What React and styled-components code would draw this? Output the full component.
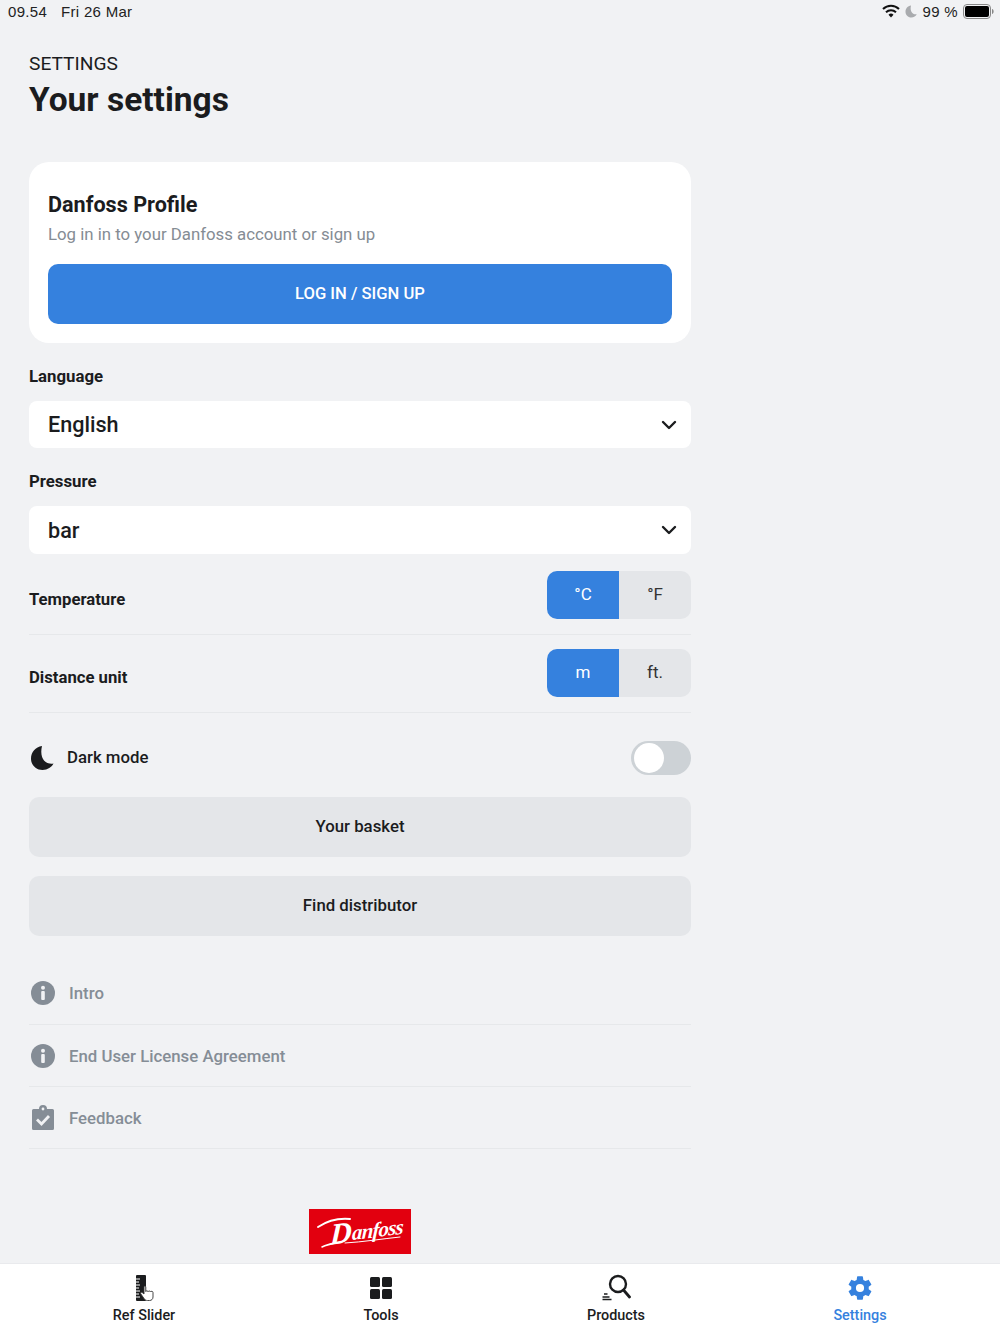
import React from 'react';
import styled, { createGlobalStyle } from 'styled-components';

const GlobalStyle = createGlobalStyle`
  html, body { margin: 0; padding: 0; }
  body { font-family: Roboto, 'Liberation Sans', sans-serif; background: #f1f2f4; color: #1b1c1e; }
  * { box-sizing: border-box; }
`;

const BLUE = '#3581de';

const Screen = styled.div`
  width: 1000px;
  height: 1334px;
  display: flex;
  flex-direction: column;
  overflow: hidden;
  background: #f1f2f4;
`;

const StatusBar = styled.div`
  height: 24px;
  padding: 0 6px 2px 8px;
  display: flex;
  align-items: center;
  justify-content: space-between;
  font-family: 'Liberation Sans', sans-serif;
  font-size: 15px;
  letter-spacing: 0.3px;
  color: #222;
`;

const StatusLeft = styled.div`
  display: flex;
  gap: 14px;
`;

const StatusRight = styled.div`
  display: flex;
  align-items: center;
  gap: 5px;
`;

const Main = styled.div`
  flex: 1;
  width: 720px;
  padding: 0 29px;
  display: flex;
  flex-direction: column;
`;

const Eyebrow = styled.div`
  margin-top: 28px;
  font-size: 19.2px;
  line-height: 24px;
  color: #1b1c1e;
`;

const Title = styled.h1`
  margin: 4px 0 0;
  font-size: 33.5px;
  line-height: 40px;
  font-weight: 700;
  color: #1b1c1e;
`;

const Card = styled.section`
  margin-top: 42px;
  height: 181px;
  padding: 28px 19px 19px;
  background: #fff;
  border-radius: 20px;
`;

const CardTitle = styled.h2`
  margin: 0;
  font-size: 21.6px;
  line-height: 30px;
  font-weight: 700;
`;

const CardText = styled.p`
  margin: 0;
  font-size: 16.8px;
  line-height: 28px;
  color: #858c94;
`;

const PrimaryButton = styled.div`
  margin-top: 16px;
  height: 60px;
  padding-bottom: 1px;
  display: flex;
  align-items: center;
  justify-content: center;
  background: ${BLUE};
  border-radius: 10px;
  color: #fff;
  font-size: 16.6px;
  font-weight: 500;
`;

const FieldLabel = styled.div`
  margin-top: 22px;
  font-size: 16.8px;
  line-height: 22px;
  font-weight: 700;
`;

const Select = styled.div`
  margin-top: 14px;
  height: ${p => p.$height}px;
  padding: 0 14px 0 19px;
  display: flex;
  align-items: center;
  justify-content: space-between;
  background: #fff;
  border-radius: 8px;
  font-size: 21.6px;
  font-weight: 500;
`;

const UnitRow = styled.div`
  height: ${p => p.$height}px;
  padding-bottom: 15px;
  display: flex;
  align-items: flex-end;
  justify-content: space-between;
  border-bottom: 1px solid #e6e8ea;
`;

const UnitLabel = styled.div`
  font-size: 16.7px;
  font-weight: 700;
  line-height: 22px;
  margin-bottom: 8px;
`;

const Segments = styled.div`
  display: flex;
  width: 144px;
  height: 48px;
  border-radius: 10px;
  overflow: hidden;
`;

const Segment = styled.div`
  flex: 1;
  display: flex;
  align-items: center;
  justify-content: center;
  padding-bottom: 2px;
  font-size: 17px;
  background: ${p => (p.$active ? BLUE : '#e4e6e9')};
  color: ${p => (p.$active ? '#fff' : '#333')};
`;

const DarkRow = styled.div`
  margin-top: 28px;
  height: 34px;
  padding-left: 1px;
  display: flex;
  align-items: center;
`;

const DarkLabel = styled.div`
  margin-left: 11px;
  margin-bottom: 2px;
  flex: 1;
  font-size: 16.8px;
  font-weight: 500;
`;

const Toggle = styled.div`
  width: 60px;
  height: 34px;
  padding: 2px 3px;
  border-radius: 17px;
  background: #cdd2d6;
`;

const Knob = styled.div`
  width: 30px;
  height: 30px;
  border-radius: 50%;
  background: #fff;
`;

const GreyButton = styled.div`
  margin-top: ${p => p.$top}px;
  height: 60px;
  padding-bottom: 3px;
  display: flex;
  align-items: center;
  justify-content: center;
  background: #e4e6e9;
  border-radius: 10px;
  font-size: 16.8px;
  font-weight: 500;
`;

const Links = styled.div`
  margin-top: 26px;
`;

const LinkRow = styled.div`
  height: ${p => p.$height}px;
  padding-left: 1px;
  display: flex;
  align-items: center;
  gap: 13px;
  border-bottom: 1px solid #e6e8ea;
  font-size: 16.8px;
  font-weight: 500;
  color: #858d96;
`;

const LogoBox = styled.div`
  margin: 60px 0 0 280px;
  width: 102px;
  height: 45px;
  background: #e2000f;
  svg { display: block; }
`;

const LogoText = styled.text`
  font-family: 'Liberation Serif', serif;
  font-style: italic;
  font-weight: 700;
  fill: #fff;
`;

const TabBar = styled.nav`
  height: 71px;
  background: #fff;
  border-top: 1px solid #e9eaed;
  display: grid;
  grid-template-columns: 144px 237px 235px 244px;
  padding-left: 72px;
`;

const Tab = styled.div`
  width: 144px;
  margin-left: ${p => p.$shift || 0}px;
  display: flex;
  flex-direction: column;
  align-items: center;
  padding-top: 9px;
  font-size: 14.4px;
  font-weight: 500;
  line-height: 20px;
  color: ${p => (p.$active ? BLUE : '#1b1c1e')};
  svg { height: 30px; margin-bottom: 3px; }
`;

const Chevron = () => (
  <svg width="16" height="10" viewBox="0 0 16 10" fill="none">
    <path d="M2 2l6 6 6-6" stroke="#1b1c1e" strokeWidth="2.4" strokeLinecap="round" strokeLinejoin="round" />
  </svg>
);

const InfoIcon = () => (
  <svg width="26" height="26" viewBox="0 0 26 26">
    <circle cx="13" cy="13" r="12" fill="#858d96" />
    <circle cx="13" cy="7.8" r="2" fill="#f1f2f4" />
    <rect x="11.2" y="11" width="3.6" height="9" rx="1" fill="#f1f2f4" />
  </svg>
);

const ClipboardIcon = () => (
  <svg width="26" height="26" viewBox="0 0 26 26">
    <path d="M2 5.5A1.5 1.5 0 0 1 3.5 4H9a4 4 0 0 1 8 0h5.5A1.5 1.5 0 0 1 24 5.5v18a1.500 1.500 0 0 1-1.500 1.500h-19A1.500 1.500 0 0 1 2 23.500z" fill="#858d96" />
    <circle cx="13" cy="4" r="1.400" fill="#f1f2f4" />
    <path d="M7 14.500l4.500 4.500 7.500-8" fill="none" stroke="#f1f2f4" strokeWidth="2.800" />
  </svg>
);

const MoonIcon = ({ size = 26, color = '#1b1c1e' }) => (
  <svg width={size} height={size} viewBox="0 0 26 26">
    <path d="M12 1C5.500 2 1 7 1 13.500 1 20 6 25 12.500 25c5 0 9.500-3 11-6.500C16 20 9 14 12 1z" fill={color} />
  </svg>
);

const WifiIcon = () => (
  <svg width="18" height="14" viewBox="0 0 18 14" fill="none" stroke="#111" strokeWidth="2">
    <path d="M1 5a11.500 11.500 0 0 1 16 0" />
    <path d="M4 8.200a7.200 7.200 0 0 1 10 0" />
    <path d="M9 13.500l-2.500-2.700a3.500 3.500 0 0 1 5 0z" fill="#111" stroke="none" />
  </svg>
);

const Battery = () => (
  <svg width="31" height="15" viewBox="0 0 31 15">
    <rect x="0.500" y="0.500" width="27" height="14" rx="3.500" fill="none" stroke="#888" />
    <rect x="2" y="2" width="24" height="11" rx="2" fill="#000" />
    <path d="M29 5c1 .3 1.600 1.200 1.600 2.500S30 9.700 29 10z" fill="#888" />
  </svg>
);

const RulerIcon = () => (
  <svg width="24" height="30" viewBox="0 0 24 30">
    <rect x="4" y="2" width="10" height="26" rx="1" fill="#1b1c1e" />
    <path d="M4 6h4M4 9h3M4 12h4M4 15h3M4 18h4M4 21h3M4 24h4" stroke="#fff" strokeWidth="1" />
    <path d="M12 14v7l-1.800-1.500c-1.200-.6-2 .6-1.300 1.500l3.100 4.500c.8 1.300 2 2 3.500 2h2c2.200 0 3.500-1.500 3.500-3.500v-4.500c0-1.500-2.200-1.500-2.500-.5 0-1.300-2.200-1.300-2.500-.3 0-1.200-2-1.200-2.200-.2V14c0-1.300-1.800-1.300-1.800 0z" fill="#fff" stroke="#333" strokeWidth="0.900" />
  </svg>
);

const GridIcon = () => (
  <svg width="24" height="30" viewBox="0 0 24 30" fill="#1b1c1e">
    <rect x="1" y="4" width="10" height="10" rx="1.500" />
    <rect x="13" y="4" width="10" height="10" rx="1.500" />
    <rect x="1" y="16" width="10" height="10" rx="1.500" />
    <rect x="13" y="16" width="10" height="10" rx="1.500" />
  </svg>
);

const SearchIcon = () => (
  <svg width="30" height="30" viewBox="0 0 30 30" fill="none" stroke="#1b1c1e">
    <circle cx="17" cy="11" r="8" strokeWidth="2.400" />
    <path d="M22.500 17l6 7" strokeWidth="2.800" strokeLinecap="round" />
    <path d="M3 21h3.500M1.500 24h7M1.500 26.500h9" strokeWidth="1.600" />
  </svg>
);

const GearIcon = () => (
  <svg width="28" height="30" viewBox="0 0 24 24" fill={BLUE}>
    <path d="M19.430 12.980c.04-.32.070-.64.070-.98s-.03-.66-.07-.98l2.110-1.650c.19-.15.240-.42.120-.64l-2-3.460c-.12-.22-.39-.3-.61-.22l-2.490 1c-.52-.4-1.080-.73-1.690-.98l-.38-2.650A.488.488 0 0 0 14 2h-4c-.25 0-.46.18-.49.420l-.38 2.650c-.61.25-1.170.59-1.690.98l-2.490-1c-.23-.09-.49 0-.61.220l-2 3.460c-.13.220-.07.490.12.640l2.110 1.650c-.04.320-.07.650-.07.980s.03.660.07.980l-2.110 1.650c-.19.150-.24.420-.12.640l2 3.460c.12.220.39.300.61.220l2.490-1c.52.400 1.080.730 1.690.980l.38 2.650c.03.240.24.420.49.420h4c.25 0 .46-.18.49-.42l.38-2.650c.61-.25 1.170-.59 1.690-.98l2.490 1c.23.090.49 0 .61-.22l2-3.460c.12-.22.070-.49-.12-.64zM12 15.500a3.500 3.500 0 1 1 0-7 3.500 3.500 0 0 1 0 7z" />
  </svg>
);

// logo: real text on a slant, the flourishes are drawn
const DanfossLogo = () => (
  <svg width="102" height="45" viewBox="0 0 102 45">
    <g transform="rotate(-7 51 22) skewX(-10)">
      <LogoText x="25" y="32" fontSize="30">D</LogoText>
      <LogoText x="47" y="30" fontSize="21" letterSpacing="-0.8">anfoss</LogoText>
    </g>
    <path d="M9 18C18 12 30 9 41 10" fill="none" stroke="#fff" strokeWidth="2" strokeLinecap="round" />
    <path d="M13 38c6-3 13-4 22-6" fill="none" stroke="#fff" strokeWidth="1.600" strokeLinecap="round" />
    <path d="M36 34c18-1 36-4 55-6" fill="none" stroke="#fff" strokeWidth="1" strokeLinecap="round" />
  </svg>
);

const App = () => (
  <Screen>
    <GlobalStyle />
    <StatusBar>
      <StatusLeft>
        <span>09.54</span>
        <span>Fri 26 Mar</span>
      </StatusLeft>
      <StatusRight>
        <WifiIcon />
        <MoonIcon size={13} color="#a9abae" />
        <span>99 %</span>
        <Battery />
      </StatusRight>
    </StatusBar>
    <Main>
      <Eyebrow>SETTINGS</Eyebrow>
      <Title>Your settings</Title>
      <Card>
        <CardTitle>Danfoss Profile</CardTitle>
        <CardText>Log in in to your Danfoss account or sign up</CardText>
        <PrimaryButton>LOG IN / SIGN UP</PrimaryButton>
      </Card>
      <FieldLabel>Language</FieldLabel>
      <Select $height={47}>
        English
        <Chevron />
      </Select>
      <FieldLabel>Pressure</FieldLabel>
      <Select $height={48}>
        bar
        <Chevron />
      </Select>
      <UnitRow $height={81}>
        <UnitLabel>Temperature</UnitLabel>
        <Segments>
          <Segment $active>°C</Segment>
          <Segment>°F</Segment>
        </Segments>
      </UnitRow>
      <UnitRow $height={78}>
        <UnitLabel>Distance unit</UnitLabel>
        <Segments>
          <Segment $active>m</Segment>
          <Segment>ft.</Segment>
        </Segments>
      </UnitRow>
      <DarkRow>
        <MoonIcon />
        <DarkLabel>Dark mode</DarkLabel>
        <Toggle>
          <Knob />
        </Toggle>
      </DarkRow>
      <GreyButton $top={22}>Your basket</GreyButton>
      <GreyButton $top={19}>Find distributor</GreyButton>
      <Links>
        <LinkRow $height={63}>
          <InfoIcon />
          Intro
        </LinkRow>
        <LinkRow $height={62}>
          <InfoIcon />
          End User License Agreement
        </LinkRow>
        <LinkRow $height={62}>
          <ClipboardIcon />
          Feedback
        </LinkRow>
      </Links>
      <LogoBox>
        <DanfossLogo />
      </LogoBox>
    </Main>
    <TabBar>
      <Tab>
        <RulerIcon />
        Ref Slider
      </Tab>
      <Tab $shift={93}>
        <GridIcon />
        Tools
      </Tab>
      <Tab $shift={91}>
        <SearchIcon />
        Products
      </Tab>
      <Tab $active $shift={100}>
        <GearIcon />
        Settings
      </Tab>
    </TabBar>
  </Screen>
);

export default App;
